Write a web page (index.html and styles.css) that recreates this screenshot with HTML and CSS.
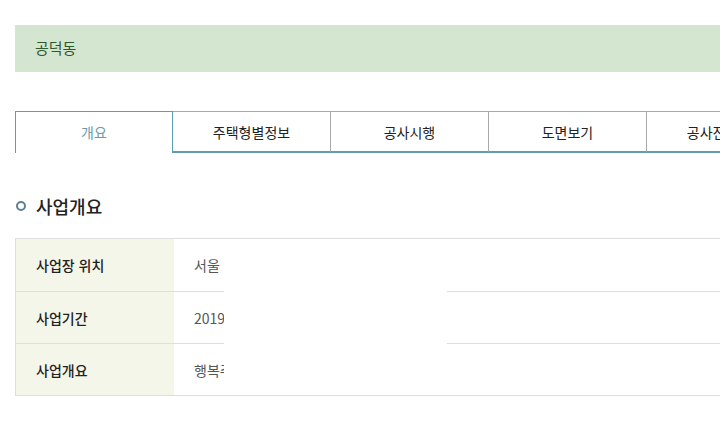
FILE: index.html
```html
<!DOCTYPE html>
<html lang="ko">
<head>
  <meta charset="UTF-8">
  <title>공덕동 사업개요</title>
  <link rel="stylesheet" href="styles.css">
</head>
<body>
  <div class="page">
    <div class="site-title">공덕동</div>

    <ul class="tabs">
      <li class="tab active">개요</li>
      <li class="tab">주택형별정보</li>
      <li class="tab">공사시행</li>
      <li class="tab">도면보기</li>
      <li class="tab">공사진행현황</li>
    </ul>

    <h3 class="section-title"><span class="bullet"></span>사업개요</h3>

    <div class="info-wrap">
      <table class="info-table">
        <tr class="first">
          <th>사업장 위치</th>
          <td>서울 마포구 공덕동</td>
        </tr>
        <tr>
          <th>사업기간</th>
          <td>2019.12 ~ 2023.06</td>
        </tr>
        <tr>
          <th>사업개요</th>
          <td>행복주택 건설사업</td>
        </tr>
      </table>
      <!-- blanked-out area -->
      <div class="mask"></div>
    </div>
  </div>
</body>
</html>
```

FILE: styles.css
```css
html, body {
  margin: 0;
  padding: 0;
  overflow: hidden;
  background: #fff;
}
body {
  font-family: "Malgun Gothic", "Noto Sans CJK KR", "Noto Sans", sans-serif;
  font-size: 14px;
  color: #222;
}
.page {
  width: 790px;
  padding: 25px 0 0 15px;
}
.site-title {
  height: 47px;
  line-height: 46px;
  padding-left: 20px;
  background: #d4e6d0;
  color: #2d5a2d;
  font-size: 15px;
}
.tabs {
  list-style: none;
  margin: 39px 0 0 0;
  padding: 0;
  display: flex;
}
.tab {
  width: 158px;
  height: 42px;
  line-height: 40px;
  text-align: center;
  box-sizing: border-box;
  flex-shrink: 0;
  border-top: 1px solid #a9a9a9;
  border-right: 1px solid #a9a9a9;
  border-bottom: 2px solid #5f9db0;
  color: #222;
}
.tab.active {
  border: 1px solid #5f9db0;
  border-bottom: none;
  color: #6a9aad;
}
.section-title {
  margin: 40px 0 0 0;
  display: flex;
  align-items: center;
  font-size: 18px;
  font-weight: 500;
  color: #222;
  line-height: 26px;
}
.bullet {
  width: 6px;
  height: 6px;
  border: 2px solid #5d7e98;
  border-radius: 50%;
  margin: 0 10px 0 1px;
}
.info-wrap {
  position: relative;
  margin-top: 19px;
}
.info-table {
  width: 100%;
  border-collapse: collapse;
  border: 1px solid #dedede;
}
.info-table th,
.info-table td {
  height: 51px;
  padding: 0;
  border-bottom: 1px solid #dedede;
  text-align: left;
  font-size: 14px;
}
.info-table .first th,
.info-table .first td {
  height: 52px;
}
.info-table th {
  width: 138px;
  padding-left: 20px;
  background: #f5f6ea;
  font-weight: 500;
  color: #222;
}
.info-table td {
  padding-left: 20px;
  color: #555;
}
.mask {
  position: absolute;
  left: 209px;
  top: 12px;
  width: 223px;
  height: 136px;
  background: #fff;
}
```
